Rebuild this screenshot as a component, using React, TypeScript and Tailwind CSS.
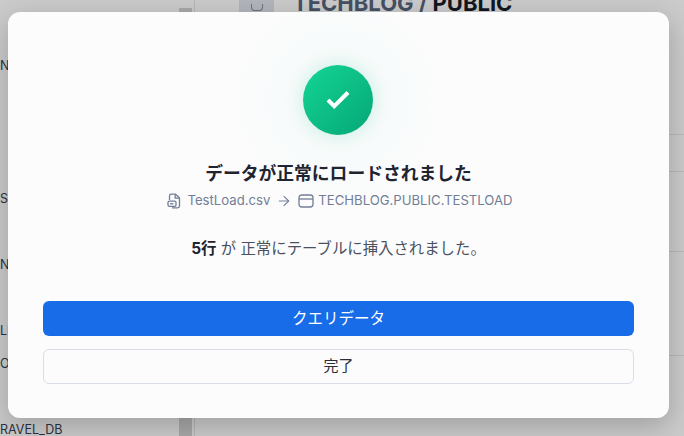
import { ArrowRight, Check } from "lucide-react";

const sans = "font-['Inter','Noto_Sans_CJK_JP',sans-serif]";

function FileBadgeIcon() {
  return (
    <svg width="14" height="16" viewBox="0 0 14 16" fill="none" stroke="currentColor" strokeWidth="1.3" strokeLinejoin="round">
      <path d="M2.5 7V3a1.8 1.8 0 0 1 1.8-1.8h4.2L12.5 5v8a1.8 1.8 0 0 1-1.8 1.8H5" />
      <path d="M8.2 1.4V5.2h4" />
      <rect x="1" y="8.2" width="8" height="5.2" rx="1.4" />
      <path d="M3 10.8h3.5" />
    </svg>
  );
}

function TableIcon() {
  return (
    <svg width="16" height="16" viewBox="0 0 16 16" fill="none" stroke="currentColor" strokeWidth="1.3">
      <rect x="1" y="2" width="14" height="12" rx="2.8" />
      <path d="M1 6h14" />
    </svg>
  );
}

function Backdrop() {
  return (
    <div className={`absolute inset-0 flex overflow-hidden bg-[#cbcbcb] ${sans}`}>
      <div className="relative w-[195px] shrink-0 border-r border-[#b5b5b5] text-[12.5px] text-[#2a3340]">
        <span className="absolute left-0 top-[57px]">N</span>
        <span className="absolute left-0 top-[190px]">S</span>
        <span className="absolute left-0 top-[256px]">N</span>
        <span className="absolute left-0 top-[322px]">LI</span>
        <span className="absolute left-0 top-[355px]">OU</span>
        <span className="absolute left-0 top-[421px]">RAVEL_DB</span>
        <div className="absolute left-[179px] top-[8px] h-[428px] w-[13px] bg-[#a8a8a8]" />
      </div>
      <div className="flex-1">
        <div className="flex h-[135px] items-start gap-[19px] border-b border-[#b9b9b9] pl-[44px]">
          <div className="flex h-[12px] w-[35px] items-end justify-center bg-[#b2b5bb] pb-[1px]">
            <div className="h-[7px] w-[12px] rounded-b-[4px] border-x-[1.5px] border-b-[1.5px] border-[#6b7280]" />
          </div>
          <span className="mt-[-11px] text-[22px] font-bold leading-[28px] text-[#465064]">
            TECHBLOG / <span className="text-[#12161f]">PUBLIC</span>
          </span>
        </div>
        <div className="h-[37px] border-b border-[#b9b9b9]" />
        <div className="h-[80px] border-b border-[#b9b9b9]" />
        <div className="h-[104px] border-b border-[#b9b9b9]" />
      </div>
    </div>
  );
}

export default function App() {
  return (
    <div className="relative h-[436px] w-[684px] overflow-hidden">
      <Backdrop />
      <div
        className={`absolute left-[8px] top-[12px] flex h-[406px] w-[661px] flex-col items-center rounded-[12px] bg-[#fcfcfd] px-[35px] shadow-[0_8px_28px_rgba(0,0,0,0.22)] ${sans}`}
      >
        <div className="relative mr-[2px] mt-[53px] flex h-[70px] w-[70px] items-center justify-center rounded-full bg-linear-to-br from-[#14d695] to-[#05a676] shadow-[0_0_20px_rgba(16,185,129,0.2)]">
          <div className="absolute left-1/2 top-1/2 h-[200px] w-[200px] -translate-x-1/2 -translate-y-1/2 rounded-full bg-[radial-gradient(circle,rgba(16,185,129,0.035),rgba(16,185,129,0.012)_60%,transparent_72%)]" />
          <Check className="relative text-white" size={30} strokeWidth={3.2} strokeLinecap="butt" strokeLinejoin="miter" />
        </div>
        <h2 className="relative mt-[27px] text-[17.8px] font-bold leading-[24px] text-[#1f2430]">
          データが正常にロードされました
        </h2>
        <div className="ml-[3px] mt-[5px] flex h-[20px] items-center text-[13.15px] text-[#727e96]">
          <span className="mr-[6px]"><FileBadgeIcon /></span>
          <span>TestLoad.csv</span>
          <ArrowRight size={16} strokeWidth={1.6} className="mx-[6px]" />
          <span className="mr-[4px]"><TableIcon /></span>
          <span>TECHBLOG.PUBLIC.TESTLOAD</span>
        </div>
        <p className="mt-[26px] text-[15.4px] leading-[24px] text-[#4a5160]">
          <span className="font-bold text-[#1f2430]">5行</span> が 正常にテーブルに挿入されました。
        </p>
        <button className="mt-[40px] h-[35px] w-full shrink-0 rounded-[6px] bg-[#186ce8] text-[15.5px] text-white">
          クエリデータ
        </button>
        <button className="mt-[13px] h-[35px] w-full shrink-0 rounded-[6px] border border-[#d9dee8] text-[15px] text-[#2a2f3a]">
          完了
        </button>
      </div>
    </div>
  );
}
